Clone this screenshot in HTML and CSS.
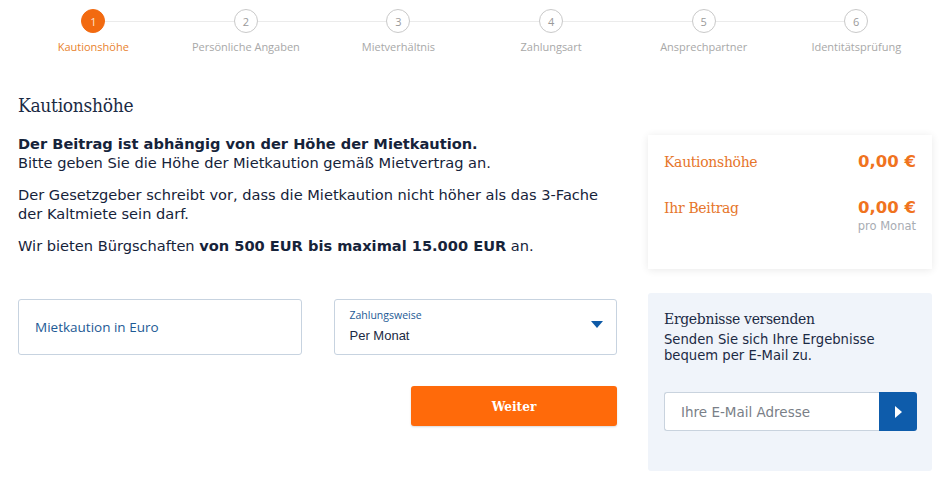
FILE: index.html
```html
<!DOCTYPE html>
<html lang="de">
<head>
<meta charset="utf-8">
<link rel="stylesheet" href="styles.css">
</head>
<body>
<div class="page">
  <ol class="steps">
    <li class="step active"><span class="num">1</span><span class="lbl">Kautionshöhe</span></li>
    <li class="step"><span class="num">2</span><span class="lbl">Persönliche Angaben</span></li>
    <li class="step"><span class="num">3</span><span class="lbl">Mietverhältnis</span></li>
    <li class="step"><span class="num">4</span><span class="lbl">Zahlungsart</span></li>
    <li class="step"><span class="num">5</span><span class="lbl">Ansprechpartner</span></li>
    <li class="step"><span class="num">6</span><span class="lbl">Identitätsprüfung</span></li>
  </ol>

  <div class="main">
    <div class="left">
      <h1 class="title">Kautionshöhe</h1>
      <p class="txt"><b>Der Beitrag ist abhängig von der Höhe der Mietkaution.</b><br>Bitte geben Sie die Höhe der Mietkaution gemäß Mietvertrag an.</p>
      <p class="txt">Der Gesetzgeber schreibt vor, dass die Mietkaution nicht höher als das 3-Fache der Kaltmiete sein darf.</p>
      <p class="txt">Wir bieten Bürgschaften <b>von 500 EUR bis maximal 15.000 EUR</b> an.</p>

      <div class="fields">
        <div class="field"><span class="ph">Mietkaution in Euro</span></div>
        <div class="field select">
          <div class="selwrap">
            <span class="small">Zahlungsweise</span>
            <span class="val">Per Monat</span>
          </div>
          <svg class="caret" width="12" height="8" viewBox="0 0 12 8"><path d="M0 0H12L6 7Z" fill="#0e5aa7"/></svg>
        </div>
      </div>
      <div class="actions"><button class="btn">Weiter</button></div>
    </div>

    <aside class="right">
      <div class="card">
        <div class="row"><span class="k">Kautionshöhe</span><span class="v">0,00 €</span></div>
        <div class="row"><span class="k">Ihr Beitrag</span><span class="vcol"><span class="v">0,00 €</span><span class="pm">pro Monat</span></span></div>
      </div>
      <div class="mailbox">
        <h2 class="mtitle">Ergebnisse versenden</h2>
        <p class="mtxt">Senden Sie sich Ihre Ergebnisse bequem per E-Mail zu.</p>
        <div class="mailform">
          <span class="mailin">Ihre E-Mail Adresse</span>
          <span class="mailbtn"><svg width="8" height="12" viewBox="0 0 8 12"><path d="M1 0L8 6L1 12Z" fill="#fff"/></svg></span>
        </div>
      </div>
    </aside>
  </div>
</div>
</body>
</html>
```

FILE: styles.css
```css
* { box-sizing: border-box; }
html, body { margin: 0; padding: 0; background: #fff; }
body { font-family: "DejaVu Sans", Verdana, sans-serif; color: #1b2a44; }
.page { width: 942px; height: 478px; overflow: hidden; }

.steps {
  list-style: none; margin: 0; padding: 9px 0 0 17px;
  display: grid; grid-template-columns: repeat(6, 152.6px);
  height: 68px;
}
.step { position: relative; display: flex; flex-direction: column; align-items: center; }
.step::before {
  content: ""; position: absolute; top: 12px; left: -50%; width: 100%; height: 1px; background: #ebebeb; z-index: 0;
}
.step:first-child::before { display: none; }
.num {
  position: relative; z-index: 1;
  width: 24px; height: 24px; border-radius: 50%;
  border: 1.5px solid #c9c9c9; background: #fff; color: #9a9a9a;
  font-family: "Open Sans", sans-serif; font-size: 11px;
  display: flex; align-items: center; justify-content: center;
}
.lbl { margin-top: 6px; font-family: "Open Sans", sans-serif; font-size: 11px; color: #a8a8a8; white-space: nowrap; }
.step.active .num { background: #f26a10; border-color: #f26a10; color: #fde3cf; }
.step.active .lbl { color: #e8822e; }

.main { display: flex; padding-left: 18px; }
.left { width: 599px; }
.title {
  margin: 25px 0 0; font-family: "DejaVu Serif", serif; font-stretch: condensed; font-weight: normal;
  font-size: 19px; color: #1b2a44; line-height: 24px; letter-spacing: -0.3px;
}
.txt { margin: 13px 0 0; font-size: 14.6px; line-height: 19px; color: #16233a; }
.txt b { font-weight: bold; }
.title + .txt { margin-top: 17px; }

.fields { display: flex; gap: 32px; margin-top: 44px; }
.field {
  width: 284px; height: 56px; border: 1px solid #c7d3e0; border-radius: 3px;
  display: flex; align-items: center; padding: 0 16px;
}
.ph { font-family: "Open Sans", sans-serif; font-size: 13.5px; color: #1d5a95; }
.select { justify-content: space-between; padding: 0 13px 0 15px; }
.selwrap { display: flex; flex-direction: column; }
.small { font-family: "Open Sans", sans-serif; font-size: 10.5px; color: #1d5a95; line-height: 14px; margin-top: -4px; }
.val { font-family: "Liberation Sans", Arial, sans-serif; font-size: 13px; color: #1b2a44; margin-top: 6px; }
.caret { margin-top: -4px; }

.actions { display: flex; justify-content: flex-end; margin-top: 31px; width: 599px; }
.btn {
  width: 206px; height: 40px; border: none; border-radius: 3px; background: #ff6a0a; color: #fff;
  font-family: "DejaVu Serif", serif; font-stretch: condensed; font-weight: bold; font-size: 13.5px;
  box-shadow: 0 1px 2px rgba(0,0,0,0.15);
}

.right { width: 284px; margin-left: 31px; }
.card {
  margin-top: 67px; height: 134px; background: #fff; padding: 16px 16px 0 16px;
  box-shadow: 0 1px 8px rgba(0,0,0,0.09);
}
.row { display: flex; justify-content: space-between; align-items: flex-start; }
.row + .row { margin-top: 24px; }
.k { font-family: "DejaVu Serif", serif; font-stretch: condensed; font-size: 15.5px; color: #e6752a; letter-spacing: -0.3px; line-height: 22px; }
.v { font-size: 16.5px; font-weight: bold; color: #f0731e; line-height: 22px; }
.vcol { display: flex; flex-direction: column; align-items: flex-end; }
.pm { font-size: 11.5px; color: #a8acb3; line-height: 14px; }

.mailbox {
  margin-top: 24px; height: 178px; background: #f0f4fa; border-radius: 3px; padding: 16px 16px 0 16px;
}
.mtitle { margin: 0; font-family: "DejaVu Serif", serif; font-stretch: condensed; font-weight: normal; font-size: 15.5px; color: #1b2a44; line-height: 20px; letter-spacing: -0.3px; }
.mtxt { margin: 3px 0 0; font-size: 13.2px; line-height: 16px; color: #1b2a44; }
.mailform { display: flex; margin-top: 28px; height: 39px; width: 253px; }
.mailin {
  flex: 1; background: #fff; border: 1px solid #c9d3de; border-right: none; border-radius: 3px 0 0 3px;
  display: flex; align-items: center; padding-left: 16px; font-size: 13.5px; color: #7a7f88;
}
.mailbtn { width: 38px; background: #0e5cab; border-radius: 0 3px 3px 0; display: flex; align-items: center; justify-content: center; }
```
